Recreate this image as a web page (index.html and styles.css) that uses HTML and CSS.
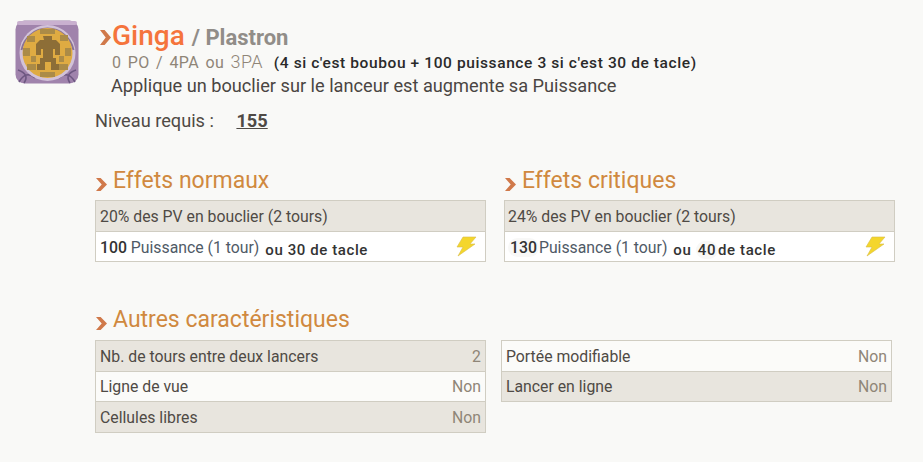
FILE: index.html
```html
<!DOCTYPE html>
<html lang="fr">
<head>
  <meta charset="UTF-8">
  <title>Ginga / Plastron</title>
  <link rel="stylesheet" href="styles.css">
</head>
<body>
  <div class="spell-head">
    <svg class="spell-icon" viewBox="0 0 64 64" width="64" height="64">
      <rect x="0.5" y="0.5" width="63" height="63" rx="9" fill="#a083ac"/>
      <rect x="2" y="1" width="60" height="4" rx="2" fill="#c9b0cf"/>
      <path d="M4 62 Q11 50 20 58 M60 62 Q53 50 44 58 M9 63 Q15 54 3 50 M55 63 Q49 54 61 50" fill="none" stroke="#6d5781" stroke-width="1.6"/>
      <circle cx="32.5" cy="33" r="28" fill="#d2c2d8"/>
      <path d="M6.500 30 A26.500 26.500 0 0 1 58.500 30" fill="none" stroke="#8a7394" stroke-width="2"/>
      <circle cx="32.500" cy="33" r="25" fill="#dfab42"/>
      <g fill="#ab8b47">
        <rect x="25" y="9" width="15" height="5"/>
        <rect x="12" y="16" width="8" height="6"/>
        <rect x="45" y="15" width="8" height="6"/>
        <rect x="8" y="28" width="7" height="8"/>
        <rect x="50" y="28" width="6" height="8"/>
        <rect x="12" y="44" width="9" height="6"/>
        <rect x="44" y="44" width="9" height="6"/>
        <rect x="25" y="52" width="15" height="5"/>
        <rect x="16" y="36" width="5" height="6"/>
        <rect x="44" y="36" width="5" height="6"/>
      </g>
      <path d="M28 16h9v4h4l4 4v11h-5v-6h-2v9h3v6h3v6h-8v-8h-6v8h-8v-6h3v-6h3v-9h-2v6h-5V24l4-4h4z" fill="#8d6e37"/>
    </svg>
    <div class="spell-info">
      <h1 class="spell-title"><span class="chevron chevron-big"></span><span class="spell-name">Ginga</span><span class="spell-type">/ Plastron</span></h1>
      <p class="spell-cost">0 PO / 4PA ou <span class="cost-alt">3PA</span><b class="spell-note">(4 si c'est boubou + 100 puissance 3 si c'est 30 de tacle)</b></p>
      <p class="spell-desc">Applique un bouclier sur le lanceur est augmente sa Puissance</p>
    </div>
  </div>
  <p class="level">Niveau requis : <b class="level-num">155</b></p>

  <div class="columns columns-effects">
    <section class="col">
      <h2 class="section-title"><span class="chevron"></span>Effets normaux</h2>
      <div class="table">
        <div class="row row-dark">20% des PV en bouclier (2 tours)</div>
        <div class="row row-light"><span class="num">100</span> Puissance (1 tour) <b class="extra">ou 30 de tacle</b><svg class="bolt" viewBox="0 0 22 22" width="22" height="22"><path d="M8 2h13l-6 7h5L3 21l5-9H2z" fill="#f4d62c" stroke="#d8bd4a" stroke-width="0.6"/></svg></div>
      </div>
    </section>
    <section class="col">
      <h2 class="section-title"><span class="chevron"></span>Effets critiques</h2>
      <div class="table">
        <div class="row row-dark row-crit">24% des PV en bouclier (2 tours)</div>
        <div class="row row-light row-crit"><span class="num num-pill">130</span>Puissance (1 tour) <b class="extra">ou <span class="num num-pill">40</span>de tacle</b><svg class="bolt" viewBox="0 0 22 22" width="22" height="22"><path d="M8 2h13l-6 7h5L3 21l5-9H2z" fill="#f4d62c" stroke="#d8bd4a" stroke-width="0.6"/></svg></div>
      </div>
    </section>
  </div>

  <h2 class="section-title others-title"><span class="chevron"></span>Autres caractéristiques</h2>
  <div class="columns columns-others">
    <div class="table col">
      <div class="row row-dark row-between"><span>Nb. de tours entre deux lancers</span><span class="val">2</span></div>
      <div class="row row-pale row-between"><span>Ligne de vue</span><span class="val">Non</span></div>
      <div class="row row-dark row-between"><span>Cellules libres</span><span class="val">Non</span></div>
    </div>
    <div class="table col">
      <div class="row row-pale row-between"><span>Portée modifiable</span><span class="val">Non</span></div>
      <div class="row row-dark row-between"><span>Lancer en ligne</span><span class="val">Non</span></div>
    </div>
  </div>
</body>
</html>
```

FILE: styles.css
```css
:root {
  --bg-color: #f9f9f7;
  --row-dark: #e8e5de;
  --row-pale: #fbfbf9;
  --border: #d0cdc2;
  --text: #4f4a45;
  --heading: #d0893f;
  --muted: #8f8577;
}

* {
  box-sizing: border-box;
  margin: 0;
  padding: 0;
}

body {
  background: var(--bg-color);
  color: var(--text);
  font-family: Roboto, sans-serif;
  font-size: 16px;
  width: 923px;
  height: 462px;
  overflow: hidden;
}

.spell-head {
  display: flex;
  padding: 20px 0 0 15px;
}

.spell-icon {
  flex: none;
  filter: blur(0.5px);
}

.spell-info {
  margin-left: 21px;
}

.spell-title {
  display: flex;
  align-items: baseline;
  height: 31px;
  line-height: 31px;
  font-weight: 700;
}

.spell-name {
  color: #f5743c;
  font-size: 28px;
  font-weight: 500;
}

.spell-type {
  color: #918d88;
  font-size: 22px;
  font-weight: 700;
  margin-left: 7px;
}

.spell-cost {
  color: var(--muted);
  font-size: 16px;
  line-height: 20px;
  margin: 1px 0 0 12px;
  letter-spacing: 0.4px;
  word-spacing: 2px;
  white-space: nowrap;
}

.cost-alt {
  font-size: 18px;
  font-weight: 300;
  letter-spacing: 0.4px;
  word-spacing: 0;
}

.spell-note {
  color: #2a2a2a;
  font-size: 15.5px;
  font-weight: 500;
  letter-spacing: 0.6px;
  word-spacing: 0;
  margin-left: 11px;
}

.spell-desc {
  font-size: 18.2px;
  line-height: 24px;
  margin: 1px 0 0 11px;
  color: #4a4542;
}

.level {
  font-size: 18.2px;
  line-height: 24px;
  margin: 11px 0 0 95px;
}

.level-num {
  margin-left: 18px;
  text-decoration: underline;
  font-weight: 700;
}

.columns {
  display: flex;
  margin-left: 95px;
}

.columns-effects {
  margin-top: 33px;
  gap: 18px;
}

.columns-others {
  gap: 15px;
  align-items: flex-start;
}

.col {
  width: 391px;
}

.section-title {
  color: var(--heading);
  font-size: 23px;
  font-weight: 400;
  line-height: 30px;
  height: 34px;
  display: flex;
  align-items: flex-start;
}

.others-title {
  margin: 43px 0 0 95px;
  height: 35px;
}

.chevron {
  flex: none;
  width: 11px;
  height: 13px;
  margin: 12px 6px 0 1px;
  background: #d0794a;
  clip-path: polygon(0 0, 42% 0, 100% 50%, 42% 100%, 0 100%, 52% 50%);
}

.chevron-big {
  width: 11px;
  height: 15px;
  margin: 10px 1px 0 0;
  align-self: flex-start;
}

.table {
  border: 1px solid var(--border);
}

.row {
  height: 30px;
  line-height: 32px;
  padding: 0 4px;
  font-size: 15.8px;
  white-space: nowrap;
}

.row + .row {
  border-top: 1px solid var(--border);
  height: 30px;
  line-height: 30px;
}

.row + .row + .row {
  height: 31px;
  line-height: 31px;
}

.row-dark {
  background: var(--row-dark);
}

.row.row-light {
  background: #fff;
  position: relative;
  color: #4f5a66;
  line-height: 31px;
}

.row-pale {
  background: var(--row-pale);
}

.row-between {
  display: flex;
  justify-content: space-between;
}

.row-crit {
  padding-left: 3px;
}

.val {
  color: var(--muted);
}

.num {
  color: #333;
  font-weight: 500;
}

.num-pill {
  background: #f8f8f7;
  border-radius: 10px;
  padding: 0 2px;
}

.extra {
  display: inline-block;
  vertical-align: -2px;
  color: #333;
  font-weight: 500;
  font-size: 15px;
  letter-spacing: 0.6px;
  margin-left: 2px;
}

.bolt {
  position: absolute;
  right: 8px;
  top: 3px;
}
```
